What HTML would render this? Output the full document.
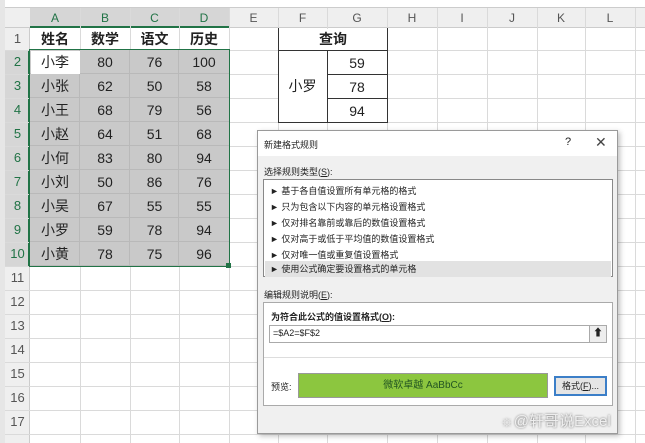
<!DOCTYPE html>
<html><head><meta charset="utf-8"><style>
*{margin:0;padding:0;box-sizing:border-box}
body{width:645px;height:443px;overflow:hidden;background:#fff;position:relative;font-family:"Liberation Sans","Noto Sans CJK SC",sans-serif;color:#222}
div{position:absolute}
.vl{top:8px;bottom:0;width:1px;background:#dadada}
.hl{left:5px;right:0;height:1px;background:#dadada}
.ch{top:8px;height:20px;font-size:12px;color:#555;text-align:center;line-height:20px}
.rh{left:5px;width:25px;font-size:13px;color:#555;text-align:center;line-height:24px;height:24px}
.c{font-size:14px;text-align:center;line-height:24px;height:24px}
.b{font-weight:bold}
.d{font-family:"Liberation Sans","Noto Sans CJK SC",sans-serif;font-size:9px;color:#222}
.li{left:1px;right:1px;height:16px;line-height:16px;padding-left:5px}
</style></head><body>
<div style="left:0;top:0;width:5px;height:443px;background:#e6e6e6"></div>
<div style="left:5px;top:0;width:640px;height:8px;background:#fff;border-bottom:1px solid #ccc"></div>
<div style="left:5px;top:8px;width:640px;height:20px;background:#efefef;border-bottom:1px solid #ccc"></div>
<div style="left:5px;top:28px;width:25px;height:415px;background:#efefef;border-right:1px solid #ccc"></div>
<div style="left:30px;top:8px;width:199px;height:20px;background:#d6d6d6;border-bottom:2px solid #217346"></div>
<div style="left:5px;top:50px;width:25px;height:216px;background:#d6d6d6;border-right:2px solid #217346"></div>
<div class="vl" style="left:80px"></div><div class="vl" style="left:130px"></div><div class="vl" style="left:179px"></div><div class="vl" style="left:229px"></div><div class="vl" style="left:278px"></div><div class="vl" style="left:327px"></div><div class="vl" style="left:387px"></div><div class="vl" style="left:437px"></div><div class="vl" style="left:487px"></div><div class="vl" style="left:537px"></div><div class="vl" style="left:585px"></div><div class="vl" style="left:635px"></div>
<div class="hl" style="top:50px"></div><div class="hl" style="top:74px"></div><div class="hl" style="top:98px"></div><div class="hl" style="top:122px"></div><div class="hl" style="top:146px"></div><div class="hl" style="top:170px"></div><div class="hl" style="top:194px"></div><div class="hl" style="top:218px"></div><div class="hl" style="top:242px"></div><div class="hl" style="top:266px"></div><div class="hl" style="top:290px"></div><div class="hl" style="top:314px"></div><div class="hl" style="top:338px"></div><div class="hl" style="top:362px"></div><div class="hl" style="top:386px"></div><div class="hl" style="top:410px"></div><div class="hl" style="top:434px"></div>
<div style="left:30px;top:50px;width:199px;height:216px;background:#c9c9c9;background-image:linear-gradient(90deg,transparent 49px,#b9b9b9 49px,#b9b9b9 50px,transparent 50px,transparent 99px,#b9b9b9 99px,#b9b9b9 100px,transparent 100px,transparent 148px,#b9b9b9 148px,#b9b9b9 149px,transparent 149px),repeating-linear-gradient(180deg,transparent 0,transparent 23px,#b9b9b9 23px,#b9b9b9 24px)"></div>
<div style="left:31px;top:51px;width:49px;height:23px;background:#fff"></div>
<div style="left:29px;top:49px;width:201px;height:218px;border:1.5px solid #217346"></div>
<div style="left:226px;top:263px;width:5px;height:5px;background:#217346"></div>
<div class="ch" style="left:30px;width:50px;color:#217346">A</div><div class="ch" style="left:80px;width:50px;color:#217346">B</div><div class="ch" style="left:130px;width:49px;color:#217346">C</div><div class="ch" style="left:179px;width:50px;color:#217346">D</div><div class="ch" style="left:229px;width:49px">E</div><div class="ch" style="left:278px;width:49px">F</div><div class="ch" style="left:327px;width:60px">G</div><div class="ch" style="left:387px;width:50px">H</div><div class="ch" style="left:437px;width:50px">I</div><div class="ch" style="left:487px;width:50px">J</div><div class="ch" style="left:537px;width:48px">K</div><div class="ch" style="left:585px;width:50px">L</div>
<div class="rh" style="top:28px;height:22px;line-height:22px">1</div>
<div class="rh" style="top:50px;color:#217346">2</div><div class="rh" style="top:74px;color:#217346">3</div><div class="rh" style="top:98px;color:#217346">4</div><div class="rh" style="top:122px;color:#217346">5</div><div class="rh" style="top:146px;color:#217346">6</div><div class="rh" style="top:170px;color:#217346">7</div><div class="rh" style="top:194px;color:#217346">8</div><div class="rh" style="top:218px;color:#217346">9</div><div class="rh" style="top:242px;color:#217346">10</div>
<div class="rh" style="top:266px">11</div><div class="rh" style="top:290px">12</div><div class="rh" style="top:314px">13</div><div class="rh" style="top:338px">14</div><div class="rh" style="top:362px">15</div><div class="rh" style="top:386px">16</div><div class="rh" style="top:410px">17</div>
<div class="c b" style="left:30px;top:27px;width:50px">姓名</div><div class="c b" style="left:80px;top:27px;width:50px">数学</div><div class="c b" style="left:130px;top:27px;width:49px">语文</div><div class="c b" style="left:179px;top:27px;width:50px">历史</div>
<div class="c" style="left:30px;top:50px;width:50px">小李</div><div class="c" style="left:80px;top:50px;width:50px">80</div><div class="c" style="left:130px;top:50px;width:49px">76</div><div class="c" style="left:179px;top:50px;width:50px">100</div>
<div class="c" style="left:30px;top:74px;width:50px">小张</div><div class="c" style="left:80px;top:74px;width:50px">62</div><div class="c" style="left:130px;top:74px;width:49px">50</div><div class="c" style="left:179px;top:74px;width:50px">58</div>
<div class="c" style="left:30px;top:98px;width:50px">小王</div><div class="c" style="left:80px;top:98px;width:50px">68</div><div class="c" style="left:130px;top:98px;width:49px">79</div><div class="c" style="left:179px;top:98px;width:50px">56</div>
<div class="c" style="left:30px;top:122px;width:50px">小赵</div><div class="c" style="left:80px;top:122px;width:50px">64</div><div class="c" style="left:130px;top:122px;width:49px">51</div><div class="c" style="left:179px;top:122px;width:50px">68</div>
<div class="c" style="left:30px;top:146px;width:50px">小何</div><div class="c" style="left:80px;top:146px;width:50px">83</div><div class="c" style="left:130px;top:146px;width:49px">80</div><div class="c" style="left:179px;top:146px;width:50px">94</div>
<div class="c" style="left:30px;top:170px;width:50px">小刘</div><div class="c" style="left:80px;top:170px;width:50px">50</div><div class="c" style="left:130px;top:170px;width:49px">86</div><div class="c" style="left:179px;top:170px;width:50px">76</div>
<div class="c" style="left:30px;top:194px;width:50px">小吴</div><div class="c" style="left:80px;top:194px;width:50px">67</div><div class="c" style="left:130px;top:194px;width:49px">55</div><div class="c" style="left:179px;top:194px;width:50px">55</div>
<div class="c" style="left:30px;top:218px;width:50px">小罗</div><div class="c" style="left:80px;top:218px;width:50px">59</div><div class="c" style="left:130px;top:218px;width:49px">78</div><div class="c" style="left:179px;top:218px;width:50px">94</div>
<div class="c" style="left:30px;top:242px;width:50px">小黄</div><div class="c" style="left:80px;top:242px;width:50px">78</div><div class="c" style="left:130px;top:242px;width:49px">75</div><div class="c" style="left:179px;top:242px;width:50px">96</div>
<div style="left:278px;top:29px;width:110px;height:21px;background:#fff"></div>
<div style="left:278px;top:51px;width:49px;height:71px;background:#fff"></div>
<div style="left:278px;top:28px;width:1px;height:95px;background:#333"></div>
<div style="left:387px;top:28px;width:1px;height:95px;background:#333"></div>
<div style="left:327px;top:50px;width:1px;height:73px;background:#333"></div>
<div style="left:278px;top:50px;width:110px;height:1px;background:#333"></div>
<div style="left:327px;top:74px;width:61px;height:1px;background:#333"></div>
<div style="left:327px;top:98px;width:61px;height:1px;background:#333"></div>
<div style="left:278px;top:122px;width:110px;height:1px;background:#333"></div>
<div class="c b" style="left:278px;top:27px;width:110px">查询</div>
<div class="c" style="left:278px;top:74px;width:49px">小罗</div>
<div class="c" style="left:327px;top:51px;width:60px">59</div><div class="c" style="left:327px;top:75px;width:60px">78</div><div class="c" style="left:327px;top:99px;width:60px">94</div>
<div style="left:257px;top:130px;width:361px;height:304px;background:#f0f0f0;border:1px solid #9a9a9a;box-shadow:2px 2px 5px rgba(0,0,0,.25)">
 <div style="left:0;top:0;width:359px;height:25px;background:#fff"></div>
 <div class="d" style="left:6px;top:7px">新建格式规则</div>
 <div class="d" style="left:307px;top:5px;font-size:11px">?</div>
 <div class="d" style="left:337px;top:3px;font-size:14px;color:#444">✕</div>
 <div class="d" style="left:6px;top:34px">选择规则类型(<u>S</u>):</div>
 <div style="left:5px;top:48px;width:350px;height:98px;background:#fff;border:1px solid #888">
  <div class="d li" style="top:3px">► 基于各自值设置所有单元格的格式</div>
  <div class="d li" style="top:19px">► 只为包含以下内容的单元格设置格式</div>
  <div class="d li" style="top:35px">► 仅对排名靠前或靠后的数值设置格式</div>
  <div class="d li" style="top:51px">► 仅对高于或低于平均值的数值设置格式</div>
  <div class="d li" style="top:67px">► 仅对唯一值或重复值设置格式</div>
  <div class="d li" style="top:81px;background:#e2e2e2">► 使用公式确定要设置格式的单元格</div>
 </div>
 <div class="d" style="left:6px;top:157px">编辑规则说明(<u>E</u>):</div>
 <div style="left:5px;top:171px;width:350px;height:104px;background:#fff;border:1px solid #aaa">
  <div class="d b" style="left:7px;top:7px">为符合此公式的值设置格式(<u>O</u>):</div>
  <div style="left:5px;top:22px;width:338px;height:18px;border:1px solid #aaa;background:#fff"></div>
  <div class="d" style="left:9px;top:25px">=$A2=$F$2</div>
  <div style="left:325px;top:23px;width:17px;height:16px;border-left:1px solid #aaa;background:#eee;font-size:10px;text-align:center;line-height:16px">⬆</div>
  <div style="left:0;top:54px;width:348px;height:1px;background:#ddd"></div>
  <div class="d" style="left:7px;top:77px">预览:</div>
  <div style="left:34px;top:70px;width:250px;height:25px;background:#8cc63f;border:1px solid #999;text-align:center;line-height:23px;font-size:10px;color:#225522">微软卓越 AaBbCc</div>
  <div style="left:290px;top:73px;width:53px;height:20px;background:#e5e5e5;border:2px solid #3c7fc8;font-size:9px;text-align:center;line-height:16px">格式(<u>F</u>)...</div>
 </div>
</div>
<div style="left:500px;top:410px;font-size:15px;color:#eee;text-shadow:0 0 2px #666">☼@轩哥说Excel</div>
</body></html>
